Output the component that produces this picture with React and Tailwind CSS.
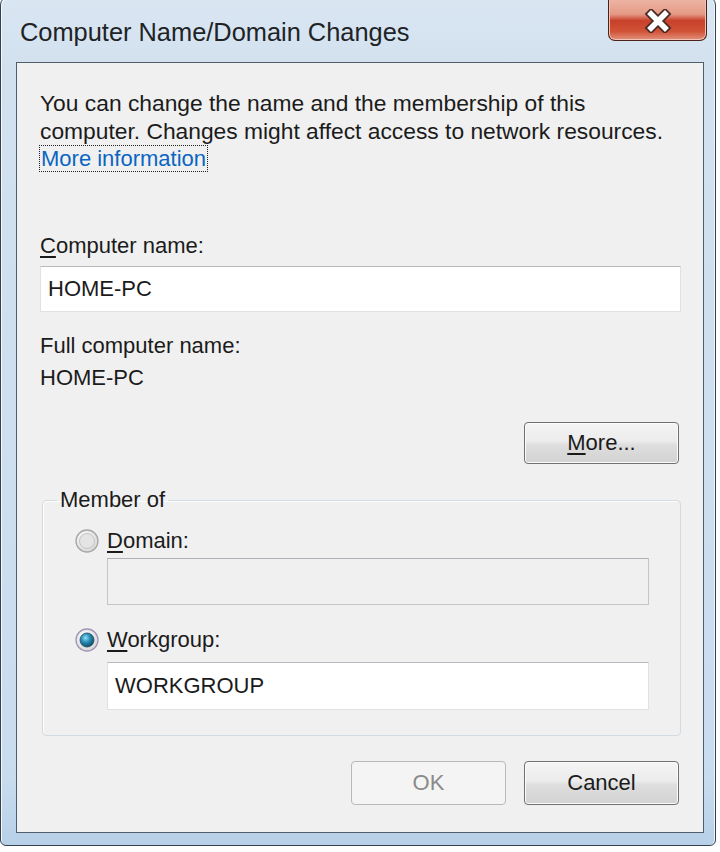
import React from "react";

function Radio({ checked }) {
  return (
    <svg width="24" height="24" viewBox="0 0 24 24" className="shrink-0">
      <defs>
        <radialGradient id={checked ? "rOn" : "rOff"} cx="40%" cy="35%" r="70%">
          <stop offset="0%" stopColor="#ffffff" />
          <stop offset="100%" stopColor="#d6d6d6" />
        </radialGradient>
        <radialGradient id="dot" cx="40%" cy="35%" r="70%">
          <stop offset="0%" stopColor="#8fe0f4" />
          <stop offset="45%" stopColor="#2a8db5" />
          <stop offset="100%" stopColor="#0f4660" />
        </radialGradient>
      </defs>
      <circle
        cx="12"
        cy="12"
        r="11"
        fill={checked ? "url(#rOn)" : "url(#rOff)"}
        stroke={checked ? "#a395b4" : "#a7a7a7"}
        strokeWidth="1.3"
      />
      {checked ? (
        <circle cx="12" cy="12" r="7" fill="url(#dot)" stroke="#1d4b63" strokeWidth="0.8" />
      ) : (
        <circle cx="12" cy="12" r="7.5" fill="#e4e4e4" stroke="#c4c4c4" strokeWidth="1" />
      )}
    </svg>
  );
}

function CloseButton() {
  return (
    <div className="-mr-[3px] w-[99px] h-[44px] flex items-center justify-center rounded-b-[7px] border border-t-0 border-[#4b2219] bg-[linear-gradient(to_bottom,#efb9a9_0%,#e49a85_40%,#c8402a_55%,#d05337_80%,#e2937c_100%)] shadow-[inset_0_0_0_1px_#f1c2b4]">
      <svg width="30" height="24" viewBox="0 0 30 24" className="mt-[4px]">
        <path d="M8 5 L22 19 M22 5 L8 19" stroke="#4a2a26" strokeWidth="9" strokeLinecap="square" />
        <path d="M8 5 L22 19 M22 5 L8 19" stroke="#ffffff" strokeWidth="5.5" strokeLinecap="square" />
      </svg>
    </div>
  );
}

function Button({ children, disabled, className }) {
  if (disabled) {
    return (
      <div
        className={`w-[155px] flex items-center justify-center rounded-[4px] border border-[#b5b9bc] bg-[#f4f4f4] text-[#8a8a8a] ${className}`}
      >
        {children}
      </div>
    );
  }
  return (
    <div
      className={`w-[155px] flex items-center justify-center rounded-[4px] border border-[#707070] bg-[linear-gradient(to_bottom,#f4f4f4_0%,#ececec_45%,#dedede_55%,#d2d2d2_100%)] shadow-[inset_0_0_0_1px_#fbfbfb] ${className}`}
    >
      {children}
    </div>
  );
}

export default function App() {
  return (
    <div className="w-[720px] h-[852px] overflow-hidden bg-white font-['Liberation_Sans',Arial,sans-serif] text-[#1b1b1b]">
      <div className="-mt-[4px] w-[716px] h-[850px] flex flex-col rounded-t-[9px] rounded-b-[6px] border border-[#34414e] bg-[linear-gradient(to_bottom,#dae6f2_0%,#d3e1ef_8%,#c9dcee_92%,#b7d0e8_100%)] pl-[15px] pr-[11px] pb-[12px] shadow-[inset_1px_1px_0_#f5f9fd,inset_-1px_0_0_#eef5fb]">
        {/* title bar */}
        <div className="h-[65px] flex items-start justify-between">
          <div className="pt-[20px] pl-[4px] text-[25.4px] leading-[30px] text-[#1e2326]">
            Computer Name/Domain Changes
          </div>
          <CloseButton />
        </div>

        {/* client area */}
        <div className="flex-1 flex flex-col border border-[#505d6a] bg-[#f0f0f0] pl-[23px] pr-[22px] pt-[26px] text-[22px] leading-[28px]">
          <p className="text-[22.8px]">
            You can change the name and the membership of this
            <br />
            computer. Changes might affect access to network resources.
          </p>
          <div>
            <span className="-ml-[1px] border border-dotted border-[#222] px-[1px] text-[#0a66c2]">
              More information
            </span>
          </div>

          <div className="mt-[59px]">
            <span className="underline underline-offset-[3px]">C</span>omputer name:
          </div>
          <div className="mt-[6px] h-[46px] flex items-center pl-[7px] bg-white border border-[#dfe1e5] border-t-[#b7b9bf]">
            HOME-PC
          </div>

          <div className="mt-[20px]">Full computer name:</div>
          <div className="mt-[4px]">HOME-PC</div>

          <Button className="mt-[30px] h-[42px] self-end mr-[2px]">
            <span>
              <span className="underline underline-offset-[3px]">M</span>ore...
            </span>
          </Button>

          <fieldset className="mt-[22px] ml-[2px] rounded-[4px] border border-[#d3dbe1] shadow-[inset_1px_1px_0_#fdfdfd]">
            <legend className="ml-[14px] px-[3px]">Member of</legend>
            <div className="pl-[32px] pr-[31px] pt-[13px] pb-[25px]">
              <div className="h-[28px] flex items-center gap-[8px]">
                <Radio />
                <span>
                  <span className="underline underline-offset-[3px]">D</span>omain:
                </span>
              </div>
              <div className="mt-[3px] ml-[32px] h-[47px] bg-[#f0f0f0] border border-[#c3c6c9] border-t-[#adb1b5]"></div>

              <div className="mt-[21px] h-[28px] flex items-center gap-[8px]">
                <Radio checked />
                <span>
                  <span className="underline underline-offset-[3px]">W</span>orkgroup:
                </span>
              </div>
              <div className="mt-[8px] ml-[32px] h-[48px] flex items-center pl-[7px] bg-white border border-[#dfe1e5] border-t-[#b7b9bf]">
                WORKGROUP
              </div>
            </div>
          </fieldset>

          <div className="mt-[25px] flex justify-end gap-[18px] pr-[2px]">
            <Button disabled className="h-[44px]">
              OK
            </Button>
            <Button className="h-[44px]">Cancel</Button>
          </div>
        </div>
      </div>
    </div>
  );
}
